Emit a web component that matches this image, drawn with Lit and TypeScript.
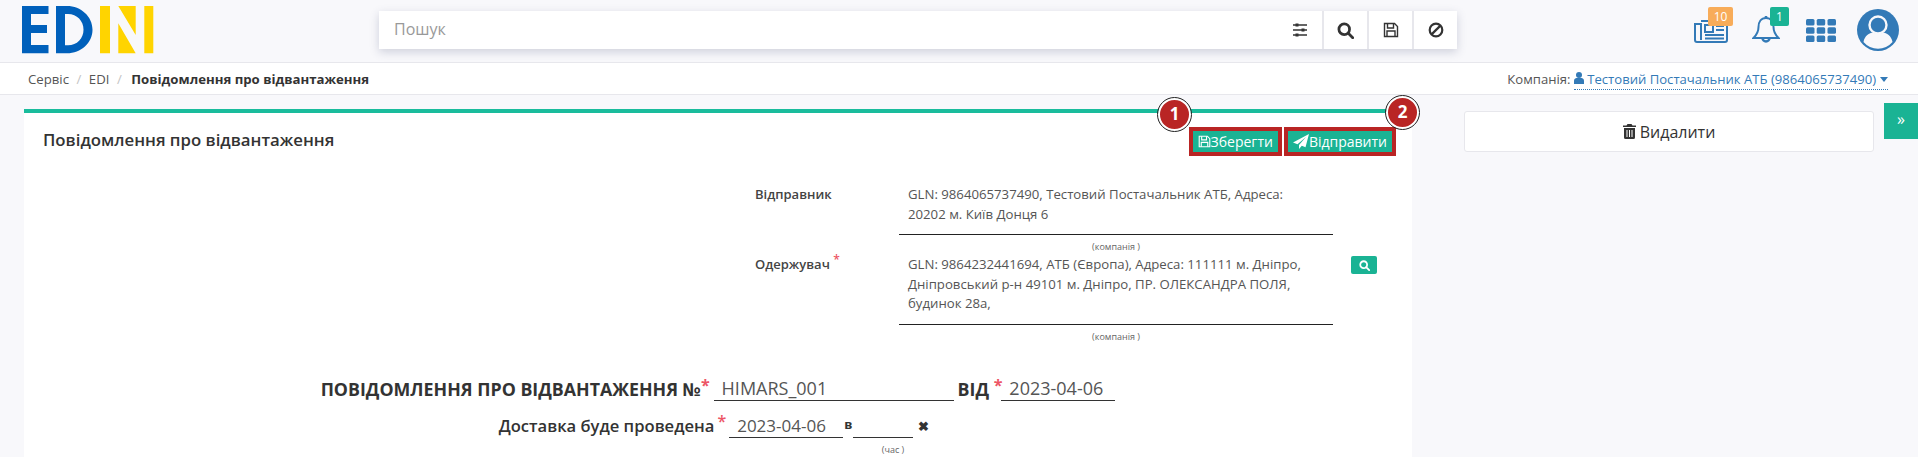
import { LitElement, html, css } from "lit";
import { customElement } from "lit/decorators.js";

const floppy = (size: number) => html`<svg width=${size} height=${size} viewBox="0 0 16 16" fill="none" stroke="currentColor" stroke-width="1.4"><path d="M1.5 1.5h10l3 3v10h-13z"/><path d="M4.5 1.5v4.5h6v-4.5M4 14.5v-5.5h8v5.5"/></svg>`;
const loupe = (size: number) => html`<svg width=${size} height=${size} viewBox="0 0 16 16" fill="none" stroke="currentColor" stroke-width="2.6"><circle cx="6.8" cy="6.8" r="5"/><path d="M10.4 10.4l4.4 4.4" stroke-linecap="round"/></svg>`;

@customElement("app-root")
export class AppRoot extends LitElement {
  static styles = css`
    :host {
      display: block;
      height: 457px;
      overflow: hidden;
      background: #f8f8fb;
      color: #333;
      font-family: "Open Sans", sans-serif;
      font-size: 13px;
    }

    .topbar {
      height: 62px;
      display: flex;
      align-items: flex-start;
      padding-left: 22px;
      box-sizing: border-box;
    }

    .logo {
      margin-top: 6px;
      width: 132px;
      height: 48px;
    }

    .search {
      margin: 11px 0 0 225px;
      width: 1078px;
      height: 38px;
      background: #fff;
      display: flex;
      box-shadow: 0 3px 9px rgba(60, 70, 110, 0.22);
    }

    .search-text {
      flex: 1;
      padding-left: 15px;
      font-size: 16px;
      line-height: 37px;
      color: #999;
    }

    .search-btn {
      width: 45px;
      display: flex;
      align-items: center;
      justify-content: center;
      border-left: 2px solid #e7e7ec;
      box-sizing: border-box;
      color: #333;
    }

    .search-btn.plain {
      border-left: none;
    }

    .tools {
      margin-left: auto;
      width: 224px;
      height: 62px;
      display: flex;
      position: relative;
    }

    .tool {
      position: absolute;
    }

    .badge {
      position: absolute;
      top: 7px;
      height: 19px;
      border-radius: 2px;
      color: #fff;
      font-size: 12px;
      line-height: 19px;
      text-align: center;
    }

    .crumbs {
      height: 33px;
      box-sizing: border-box;
      background: #fff;
      border-top: 1px solid #e7e7ec;
      border-bottom: 1px solid #e7e7ec;
      display: flex;
      align-items: center;
      padding: 0 30px 0 28px;
      color: #555;
      font-size: 13.2px;
    }

    .crumbs .sep {
      color: #c4c4c4;
      padding: 0 7.5px;
    }

    .crumbs b {
      color: #333;
      font-weight: 700;
      margin-left: 2px;
    }

    .company {
      margin-left: auto;
      color: #555;
      white-space: nowrap;
      font-size: 13.1px;
    }

    .company span {
      color: #337ab7;
      border-bottom: 1px dotted #337ab7;
      padding-bottom: 1px;
    }

    .company i {
      display: inline-block;
      border: 4px solid transparent;
      border-top: 5px solid #337ab7;
      border-bottom: none;
      margin: 0 0 2px 4px;
    }

    .main {
      display: flex;
      align-items: flex-start;
      padding: 14px 0 0 24px;
    }

    .panel {
      position: relative;
      width: 1388px;
      height: 360px;
      flex: none;
      box-sizing: border-box;
      background: #fff;
      border-top: 4px solid #1abc9c;
    }

    .panel-head {
      display: flex;
      justify-content: space-between;
      padding: 14px 16px 0 19px;
      height: 72px;
      box-sizing: border-box;
    }

    .panel-head h2 {
      margin: 0;
      font-size: 16.8px;
      font-weight: 600;
      line-height: 26px;
    }

    .actions {
      display: flex;
      gap: 2px;
      align-items: flex-start;
    }

    .save {
      height: 29px;
      box-sizing: border-box;
      background: #1ab394;
      border: 4px solid #b92524;
      color: #fff;
      font-size: 14px;
      padding: 0 5px;
      display: flex;
      align-items: center;
    }

    .mark {
      position: absolute;
      width: 33px;
      height: 33px;
      box-sizing: border-box;
      border-radius: 50%;
      background: #b92524;
      border: 2px solid #fff;
      outline: 1px solid #222;
      color: #fff;
      font-size: 17px;
      font-weight: 700;
      line-height: 28px;
      text-align: center;
    }

    .party {
      display: grid;
      grid-template-columns: 144px 434px 44px;
      margin-left: 731px;
    }

    .party .label {
      grid-column: 1;
      font-weight: 600;
      line-height: 19px;
      color: #444;
    }

    .req {
      color: #ed5565;
      font-size: 16px;
      vertical-align: 5px;
      line-height: 0;
    }

    .party .req {
      font-size: 12px;
    }

    .party .value {
      font-size: 13.2px;
      line-height: 19.5px;
      padding: 0 9px 10px;
      border-bottom: 1.5px solid #222;
      color: #555;
    }

    .hint {
      font-size: 9px;
      color: #666;
      text-align: center;
      line-height: 12px;
    }

    .party .hint {
      grid-column: 2;
      padding: 6px 0 2px;
    }

    .find {
      margin-left: 18px;
      width: 26px;
      height: 18px;
      background: #1ab394;
      border-radius: 2px;
      color: #fff;
      display: flex;
      align-items: center;
      justify-content: center;
      margin-top: 1px;
    }

    .doc-line {
      display: flex;
      justify-content: center;
      align-items: flex-start;
      white-space: nowrap;
    }

    .doc-title {
      margin-top: 31px;
      font-size: 17.8px;
      font-weight: 700;
      line-height: 26px;
      gap: 4px;
    }

    .doc-date {
      margin-right: -5px;
    }

    .doc-sub {
      margin-top: 12px;
      font-size: 16.6px;
      font-weight: 600;
      line-height: 24px;
      padding-right: 8px;
    }

    .doc-sub .req {
      margin: 0 3px 0 3px;
    }

    .field {
      border-bottom: 1.5px solid #333;
      font-size: 18px;
      font-weight: 400;
      line-height: 24px;
      height: 25px;
      padding-left: 8px;
      box-sizing: border-box;
      color: #555;
    }

    .doc-sub .field {
      font-size: 17px;
      height: 24px;
    }

    .at {
      font-size: 13px;
      font-weight: 700;
      line-height: 20px;
      margin: 0 1px;
    }

    .clear {
      font-size: 13px;
      font-weight: 700;
      margin-left: 5px;
    }

    .time-hint {
      padding-left: 350px;
      margin-top: 6px;
    }

    .side {
      margin-left: 52px;
      width: 410px;
      height: 41px;
      margin-top: 2px;
      box-sizing: border-box;
      background: #fff;
      border: 1px solid #e7e7ec;
      border-radius: 3px;
      display: flex;
      align-items: center;
      justify-content: center;
      gap: 4px;
      font-size: 16px;
      color: #333;
    }

    .expand {
      margin-left: 10px;
      margin-top: -6px;
      width: 34px;
      height: 36px;
      background: #1ab394;
      color: #fff;
      font-size: 16px;
      line-height: 33px;
      text-align: center;
      flex: none;
    }
  `;

  render() {
    return html`
      <div class="topbar">
        <svg class="logo" viewBox="0 0 132 48">
          <path fill="#0060bb" d="M0 0h26.500v8H9v11h16v8H9v12h17.500v8.300H0zM34 0h11c14 0 25.500 10.500 25.500 23.700S59 47.300 45 47.300H34zM43 8v31.300h3c9 0 15.500-7 15.500-15.600S55 8 46 8z"/>
          <path fill="#ffd400" d="M78 0h10v47.300H78zM96.300 0h17.400v29zM96.300 17.300l17.400 30H96.300zM122.300 0h9v47.300h-9z"/>
        </svg>
        <div class="search">
          <div class="search-text">Пошук</div>
          <div class="search-btn plain">
            <svg width="16" height="16" viewBox="0 0 16 16" fill="none" stroke="#333" stroke-width="1.3"><path d="M1 3h14M1 8h14M1 13h14"/><path stroke-width="3" d="M5 1.5v3M11 6.500v3M5 11.500v3"/></svg>
          </div>
          <div class="search-btn">${loupe(17)}</div>
          <div class="search-btn">${floppy(16)}</div>
          <div class="search-btn">
            <svg width="16" height="16" viewBox="0 0 16 16" fill="none" stroke="#333" stroke-width="2.2"><circle cx="8" cy="8" r="6.300"/><path d="M3.600 12.400l8.800-8.800"/></svg>
          </div>
        </div>
        <div class="tools">
          <svg class="tool" style="left:0;top:18px" width="34" height="25" viewBox="0 0 34 25" fill="none" stroke="#337ab7" stroke-width="2"><path d="M7 3h26v19a2 2 0 0 1-2 2H3a2 2 0 0 1-2-2V6h6v16"/><path d="M11 7h8v7h-8z"/><path d="M22 8h8M22 12h8M11 17h19M11 20.500h19"/></svg>
          <span class="badge" style="left:14px;width:25px;background:#f8ac59">10</span>
          <svg class="tool" style="left:58px;top:15px" width="28" height="30" viewBox="0 0 28 30" fill="none" stroke="#337ab7" stroke-width="2"><path d="M14 3c-5 0-7.500 4-7.500 9 0 5-2 8-5 11h25c-3-3-5-6-5-11 0-5-2.500-9-7.500-9z"/><path d="M14 1v2M10.500 23a3.500 3.500 0 0 0 7 0" stroke-width="2.500"/></svg>
          <span class="badge" style="left:76px;width:19px;background:#1ab394">1</span>
          <svg class="tool" style="left:112px;top:19px" width="30" height="23" viewBox="0 0 30 23" fill="#337ab7"><rect width="8.500" height="6.500" rx="1.500"/><rect x="10.700" width="8.500" height="6.500" rx="1.500"/><rect x="21.500" width="8.500" height="6.500" rx="1.500"/><rect y="8.300" width="8.500" height="6.500" rx="1.500"/><rect x="10.700" y="8.300" width="8.500" height="6.500" rx="1.500"/><rect x="21.500" y="8.300" width="8.500" height="6.500" rx="1.500"/><rect y="16.500" width="8.500" height="6.500" rx="1.500"/><rect x="10.700" y="16.500" width="8.500" height="6.500" rx="1.500"/><rect x="21.500" y="16.500" width="8.500" height="6.500" rx="1.500"/></svg>
          <svg class="tool" style="left:163px;top:9px" width="42" height="42" viewBox="0 0 42 42"><circle cx="21" cy="21" r="21" fill="#337ab7"/><circle cx="21" cy="16" r="8.500" fill="#337ab7" stroke="#f8f8fb" stroke-width="2.400"/><path d="M6.500 33c1-6 6-9.500 9.500-9.500 3 2 7 2 10 0 3.500 0 8.500 3.500 9.500 9.500a19 19 0 0 1-29 0z" fill="#f8f8fb"/></svg>
        </div>
      </div>

      <div class="crumbs">
        Сервіс<span class="sep">/</span>EDI<span class="sep">/</span><b>Повідомлення про відвантаження</b>
        <div class="company">Компанія: <span><svg width="10" height="12" viewBox="0 0 10 12" fill="#337ab7"><circle cx="5" cy="3" r="3"/><path d="M0 12V8.500C0 7 1.500 6 2.500 6h5C8.500 6 10 7 10 8.500V12z"/></svg> Тестовий Постачальник АТБ (9864065737490)<i></i></span></div>
      </div>

      <div class="main">
        <section class="panel">
          <div class="panel-head">
            <h2>Повідомлення про відвантаження</h2>
            <div class="actions">
              <div class="save">${floppy(13)}Зберегти</div>
              <div class="save">
                <svg width="16" height="15" viewBox="0 0 16 15" fill="#fff"><path d="M16 0L0 8.500l4.500 1.800L13 3 6 11v4l2.800-3.300 3.700 1.500z"/></svg>Відправити
              </div>
            </div>
          </div>
          <span class="mark" style="left:1134px;top:-15px">1</span>
          <span class="mark" style="left:1362px;top:-17px">2</span>

          <div class="party">
            <div class="label">Відправник</div>
            <div class="value">GLN: 9864065737490, Тестовий Постачальник АТБ, Адреса:<br />20202 м. Київ Донця 6</div>
            <div class="hint">(компанія )</div>
            <div class="label">Одержувач <span class="req">*</span></div>
            <div class="value">GLN: 9864232441694, АТБ (Європа), Адреса: 111111 м. Дніпро,<br />Дніпровський р-н 49101 м. Дніпро, ПР. ОЛЕКСАНДРА ПОЛЯ,<br />будинок 28а,</div>
            <div class="find">${loupe(11)}</div>
            <div class="hint">(компанія )</div>
          </div>

          <div class="doc-line doc-title">
            <span>ПОВІДОМЛЕННЯ ПРО ВІДВАНТАЖЕННЯ №<span class="req">*</span></span>
            <div class="field" style="width:240px">HIMARS_001</div>
            <span class="doc-date">ВІД <span class="req">*</span></span>
            <div class="field" style="width:114px">2023-04-06</div>
          </div>
          <div class="doc-line doc-sub">
            <span>Доставка буде проведена<span class="req">*</span></span>
            <div class="field" style="width:114px">2023-04-06</div>
            <span class="at">в</span>
            <div class="field" style="width:60px"></div>
            <span class="clear">✖</span>
          </div>
          <div class="hint time-hint">(час )</div>
        </section>

        <div class="side">
          <svg width="13" height="15" viewBox="0 0 13 15" fill="#333"><path d="M4.500 0h4l1 1.500H13V3H0V1.500h3.500zM1 4h11v9.500a1.500 1.500 0 0 1-1.500 1.500h-8A1.500 1.500 0 0 1 1 13.500zM3.500 6v7h1V6zm2.500 0v7h1V6zm2.500 0v7h1V6z"/></svg>
          Видалити
        </div>
        <div class="expand">»</div>
      </div>
    `;
  }
}
